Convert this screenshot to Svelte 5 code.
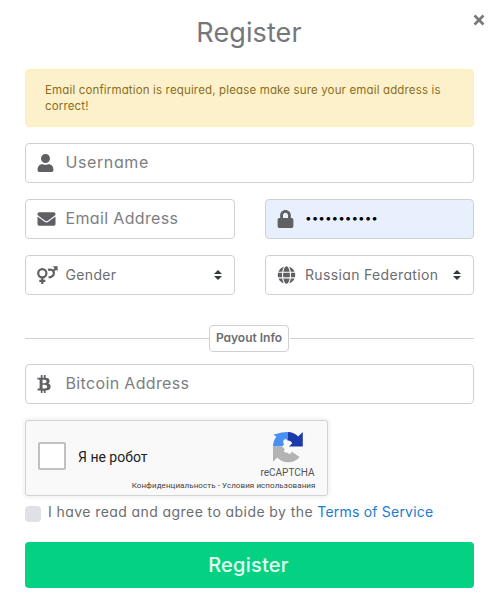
<script lang="ts">
  let username = $state('')
  let email = $state('')
  let password = $state('password123')
  let bitcoin = $state('')
  let gender = $state('')
  let country = $state('RU')
</script>

<main>
  <header>
    <h1>Register</h1>
    <button class="close" type="button" aria-label="Close">
      <svg viewBox="0 0 12 12"><path d="M1.5 1.5l9 9M10.5 1.5l-9 9" /></svg>
    </button>
  </header>

  <form>
    <p class="alert">
      Email confirmation is required, please make sure your email address is correct!
    </p>

    <label class="field">
      <svg class="icon user" viewBox="0 0 448 512">
        <path d="M224 256c70.7 0 128-57.3 128-128S294.7 0 224 0 96 57.3 96 128s57.3 128 128 128zm89.6 32h-16.7c-22.2 10.2-46.9 16-72.9 16s-50.6-5.8-72.9-16h-16.7C60.2 288 0 348.2 0 422.4V464c0 26.5 21.5 48 48 48h352c26.5 0 48-21.5 48-48v-41.6c0-74.2-60.2-134.4-134.4-134.4z" />
      </svg>
      <input class="username" type="text" placeholder="Username" bind:value={username} />
    </label>

    <div class="row">
      <label class="field">
        <svg class="icon" viewBox="0 0 512 512">
          <path d="M502.3 190.8c3.9-3.1 9.7-.2 9.7 4.7V400c0 26.5-21.5 48-48 48H48c-26.5 0-48-21.5-48-48V195.6c0-5 5.7-7.8 9.7-4.7 22.4 17.4 52.1 39.5 154.1 113.6 21.1 15.4 56.7 47.8 92.2 47.6 35.7.3 72-32.8 92.3-47.6 102-74.1 131.6-96.3 154-113.7zM256 320c23.2.4 56.6-29.2 73.4-41.4 132.7-96.3 142.8-104.7 173.4-128.7 5.8-4.5 9.2-11.5 9.2-18.9v-19c0-26.5-21.5-48-48-48H48c-26.5 0-48 21.5-48 48v19c0 7.4 3.4 14.3 9.2 18.9 30.6 23.9 40.7 32.4 173.4 128.7 16.8 12.2 50.2 41.8 73.4 41.4z" />
        </svg>
        <input type="text" placeholder="Email Address" bind:value={email} />
      </label>
      <label class="field filled">
        <svg class="icon lock" viewBox="0 0 448 512">
          <path d="M400 224h-24v-72C376 68.2 307.8 0 224 0S72 68.2 72 152v72H48c-26.5 0-48 21.5-48 48v192c0 26.5 21.5 48 48 48h352c26.5 0 48-21.5 48-48V272c0-26.5-21.5-48-48-48zm-104 0H152v-72c0-39.7 32.3-72 72-72s72 32.3 72 72v72z" />
        </svg>
        <input class="password" type="password" bind:value={password} />
      </label>
    </div>

    <div class="row">
      <label class="field">
        <svg class="icon gender" viewBox="0 0 21 18">
          <g fill="none" stroke="currentColor" stroke-width="2.2">
            <circle cx="5.3" cy="7.2" r="4.1" />
            <path d="M5.3 11.3V18M2.3 14.8h6" />
            <path d="M11 3.9c7-2.2 8.4 7.3.6 7.500M16.400 5l2.800-3" />
          </g>
          <path d="M15.600.3h5v5z" />
        </svg>
        <select bind:value={gender}>
          <option value="">Gender</option>
        </select>
        <svg class="arrows" viewBox="0 0 8 10"><path d="M4 0l4 4H0zM0 6h8l-4 4z" /></svg>
      </label>
      <label class="field">
        <svg class="icon" viewBox="0 0 496 512">
          <path d="M336.5 160C322 70.7 287.8 8 248 8s-74 62.7-88.5 152h177zM152 256c0 22.2 1.2 43.5 3.3 64h185.3c2.1-20.5 3.3-41.8 3.3-64s-1.2-43.5-3.3-64H155.3c-2.1 20.5-3.3 41.8-3.3 64zm324.7-96c-28.6-67.9-86.5-120.4-158-141.6 24.4 33.8 41.2 84.7 50 141.6h108zM177.2 18.4C105.8 39.6 47.8 92.1 19.3 160h108c8.7-56.9 25.5-107.8 49.9-141.6zM487.4 192H372.7c2.1 21 3.3 42.5 3.3 64s-1.2 43-3.3 64h114.6c5.5-20.5 8.6-41.8 8.6-64s-3.1-43.5-8.5-64zM120 256c0-21.5 1.2-43 3.3-64H8.6C3.2 212.5 0 233.8 0 256s3.2 43.5 8.6 64h114.6c-2-21-3.2-42.5-3.2-64zm39.5 96c14.5 89.3 48.7 152 88.5 152s74-62.7 88.5-152h-177zm159.3 141.6c71.4-21.2 129.4-73.7 158-141.6h-108c-8.8 56.9-25.6 107.8-50 141.6zM19.3 352c28.6 67.9 86.5 120.4 158 141.6-24.4-33.8-41.2-84.7-50-141.6h-108z" />
        </svg>
        <select bind:value={country}>
          <option value="RU">Russian Federation</option>
        </select>
        <svg class="arrows" viewBox="0 0 8 10"><path d="M4 0l4 4H0zM0 6h8l-4 4z" /></svg>
      </label>
    </div>

    <div class="divider"><span>Payout Info</span></div>

    <label class="field">
      <svg class="icon bitcoin" viewBox="0 0 384 512">
        <path d="M310.204 242.638c27.73-14.18 45.377-39.39 41.28-81.3-5.358-57.351-52.458-76.573-114.85-81.929V0h-48.528v77.203c-12.605 0-25.525.315-38.444.63V0h-48.53v79.409c-17.842.539-38.622.276-97.37 0v51.678c38.314-.678 58.417-3.14 63.023 21.427v217.429c-2.925 19.492-18.524 16.685-53.255 16.071L3.765 443.68c88.481 0 97.37.315 97.37.315V512h48.53v-67.06c13.234.315 26.154.315 38.444.315V512h48.528v-68.005c81.299-4.412 135.647-24.894 142.895-101.467 5.671-61.446-23.32-88.862-69.326-99.89zM150.608 134.553c27.415 0 113.126-8.507 113.126 48.528 0 54.515-85.71 48.212-113.126 48.212v-96.74zm0 251.776V279.821c32.772 0 133.127-9.138 133.127 53.255-.001 60.186-100.355 53.253-133.127 53.253z" />
      </svg>
      <input type="text" placeholder="Bitcoin Address" bind:value={bitcoin} />
    </label>

    <div class="captcha">
      <span class="captcha-box"></span>
      <span class="captcha-label">Я не робот</span>
      <div class="captcha-brand">
        <svg viewBox="0 0 32 32">
          <path fill="#4a90f2" d="M1 15.5C1 11.8 2.2 8.6 4.3 6L1.6 3.2 4.6 3C7.5 1.7 11 1 15.7 1v8.6l-2-1.5c-2.6.6-3.2 3-1.5 5.4l-2.5 2z" />
          <path fill="#1c3aa9" d="M15.7 1c4.2 0 7.7 1.6 10.4 4.4L30.8 1v14.5H17l3.2-3.3c-.8-1.8-2.5-2.7-4.5-2.6z" />
          <path fill="#b3b3b3" d="M1 15.5h9.2l2.5 2.8c-1.6 2.3.3 4 2.5 3.2 1.5 2.3 4.4 1.5 4.3-1.1l8.2 5.6C24.8 29.4 20.7 31.3 16 31.3c-4.5 0-8-1.7-10.7-4.7L1 30.8z" />
        </svg>
        <span>reCAPTCHA</span>
      </div>
      <div class="captcha-links">Конфиденциальность - Условия использования</div>
    </div>

    <label class="terms">
      <span class="check"></span>
      <span>I have read and agree to abide by the <a href="#terms">Terms of Service</a></span>
    </label>

    <button class="submit" type="button">Register</button>
  </form>
</main>

<style>
  :global(body) {
    background: #fff;
  }

  main {
    box-sizing: border-box;
    height: 594px;
    padding: 0 20px 0 25px;
    overflow: hidden;
    color: #6b6d70;
    font-family: Inter, 'Open Sans', sans-serif;
    font-feature-settings: 'cv11';
  }

  header {
    position: relative;
    height: 69px;
  }

  h1 {
    margin: 0;
    padding: 13px 1px 0 0;
    color: #76777a;
    font-size: 27px;
    font-weight: 400;
    line-height: 40px;
    letter-spacing: 0.1px;
    text-align: center;
  }

  .close {
    position: absolute;
    top: 14px;
    right: -11px;
    width: 12px;
    height: 12px;
    padding: 0;
    border: 0;
    background: none;
  }

  .close svg {
    display: block;
    fill: none;
    stroke: #77787b;
    stroke-width: 2.6;
  }

  form {
    display: flex;
    flex-direction: column;
  }

  .alert {
    box-sizing: border-box;
    height: 58px;
    margin: 0 0 16px;
    padding: 12px 19px;
    border: 1px solid #ffeeba;
    border-radius: 4px;
    background: #fdf1cb;
    color: #8c6d1c;
    font-size: 11.5px;
    line-height: 16px;
    letter-spacing: 0.15px;
  }

  .row {
    display: grid;
    grid-template-columns: repeat(2, minmax(0, 1fr));
    gap: 30px;
  }

  .field {
    display: flex;
    box-sizing: border-box;
    align-items: center;
    height: 40px;
    margin-bottom: 16px;
    padding: 0 12px 0 11px;
    border: 1px solid #ced1d4;
    border-radius: 4px;
    background: #fff;
  }

  .filled {
    background: #e8f0fe;
  }

  .icon {
    flex: none;
    width: 19px;
    height: 18px;
    margin-right: 9.5px;
    fill: #5f6063;
    color: #5f6063;
  }

  .user,
  .lock {
    width: 17px;
    margin-right: 11.5px;
  }

  .gender {
    width: 21px;
    margin-right: 7.5px;
  }

  .bitcoin {
    width: 14px;
    margin-right: 14.5px;
  }

  input,
  select {
    flex: 1;
    min-width: 0;
    height: 36px;
    padding: 0 0 2px;
    border: 0;
    outline: 0;
    appearance: none;
    background: none;
    color: #6b6d70;
    font: inherit;
    font-size: 16px;
    font-feature-settings: inherit;
    letter-spacing: 0.35px;
  }

  input::placeholder {
    color: #7c7e81;
    opacity: 1;
  }

  .username {
    letter-spacing: 0.6px;
  }

  select {
    font-size: 14px;
  }

  .password {
    color: #000;
    font-size: 11.8px;
    letter-spacing: 0;
  }

  .arrows {
    flex: none;
    width: 8px;
    height: 10px;
    fill: #343a40;
  }

  .divider {
    display: flex;
    align-items: center;
    margin: 14px 0 12px;
  }

  .divider::before,
  .divider::after {
    flex: 1;
    height: 1px;
    background: #ced1d4;
    content: '';
  }

  .divider span {
    box-sizing: border-box;
    width: 80px;
    height: 27px;
    margin-right: 1px;
    border: 1px solid #ced1d4;
    border-radius: 4px;
    font-size: 12px;
    font-weight: 600;
    line-height: 24px;
    text-align: center;
    white-space: nowrap;
  }

  .captcha {
    display: grid;
    box-sizing: border-box;
    grid-template-rows: 57px 16px;
    grid-template-columns: 28px 1fr 56px;
    align-items: center;
    width: 303px;
    height: 76px;
    padding: 0 11.5px 0 12px;
    border: 1px solid #d3d3d3;
    border-radius: 3px;
    background: #f9f9f9;
    box-shadow: 0 0 4px 1px rgba(0, 0, 0, 0.08);
    color: #222;
    font-family: Roboto, sans-serif;
  }

  .captcha-box {
    box-sizing: border-box;
    width: 28px;
    height: 28px;
    margin-top: 13px;
    border: 2px solid #c1c1c1;
    border-radius: 2px;
    background: #fff;
  }

  .captcha-label {
    padding: 15px 0 0 12px;
    font-size: 14px;
  }

  .captcha-brand {
    display: flex;
    flex-direction: column;
    align-items: center;
    padding-top: 11px;
    color: #555;
    font-size: 10px;
    line-height: 14px;
  }

  .captcha-brand svg {
    width: 32px;
    height: 32px;
    margin-bottom: 3px;
  }

  .captcha-links {
    grid-column: 1 / -1;
    color: #444;
    font-size: 8px;
    line-height: 12px;
    letter-spacing: 0.08px;
    text-align: right;
    white-space: nowrap;
  }

  .terms {
    display: flex;
    align-items: center;
    height: 22px;
    margin: 4px 0 20px;
    font-size: 14px;
    letter-spacing: 0.42px;
    white-space: nowrap;
  }

  .check {
    width: 16px;
    height: 16px;
    margin: 5px 7px 0 0;
    border-radius: 4px;
    background: #dfe1e4;
  }

  a {
    color: #1b7cd0;
    letter-spacing: 0.2px;
    text-decoration: none;
  }

  .submit {
    height: 46px;
    padding: 0 2px 0 0;
    border: 0;
    border-radius: 4px;
    background: #04d182;
    color: #e4fff3;
    font: inherit;
    font-size: 20px;
    font-weight: 500;
    font-feature-settings: inherit;
    letter-spacing: 0.25px;
  }
</style>
